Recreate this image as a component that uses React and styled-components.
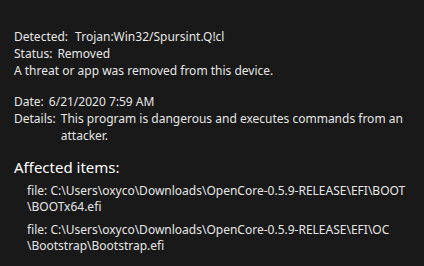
import React from 'react';
import styled, { createGlobalStyle } from 'styled-components';

const GlobalStyle = createGlobalStyle`
    html, body {
        margin: 0;
        padding: 0;
        background: #191919;
    }
    body {
        font-family: "Noto Sans", "Open Sans", sans-serif;
    }
`;

const Page = styled.div`
    width: 424px;
    height: 266px;
    box-sizing: border-box;
    padding: 28px 14px 0 14px;
    background: #191919;
    color: #e6e6e6;
    font-size: 12px;
    line-height: 17px;
    overflow: hidden;
`;

const Section = styled.div`
    margin-bottom: ${(p) => p.gap || 0}px;
`;

const Row = styled.div`
    display: flex;
    gap: ${(p) => p.gap || 5}px;
    white-space: nowrap;
`;

const Label = styled.span`
    flex: none;
`;

const Value = styled.div`
    display: flex;
    flex-direction: column;
`;

const Heading = styled.div`
    font-size: 15px;
    line-height: 20px;
    color: #ffffff;
    margin-bottom: 6px;
`;

const Item = styled.div`
    padding-left: 13px;
    margin-bottom: 7px;
    white-space: nowrap;
    line-height: 16px;
`;

const items = [
    ['file: C:\\Users\\oxyco\\Downloads\\OpenCore-0.5.9-RELEASE\\EFI\\BOOT', '\\BOOTx64.efi'],
    ['file: C:\\Users\\oxyco\\Downloads\\OpenCore-0.5.9-RELEASE\\EFI\\OC', '\\Bootstrap\\Bootstrap.efi'],
];

const App = () => {
    return (
        <Page>
            <GlobalStyle />
            <Section gap={14}>
                <Row gap={7}>
                    <Label>Detected:</Label>
                    <Value>Trojan:Win32/Spursint.Q!cl</Value>
                </Row>
                <Row>
                    <Label>Status:</Label>
                    <Value>Removed</Value>
                </Row>
                <div>A threat or app was removed from this device.</div>
            </Section>
            <Section gap={13}>
                <Row>
                    <Label>Date:</Label>
                    <Value>6/21/2020 7:59 AM</Value>
                </Row>
                <Row>
                    <Label>Details:</Label>
                    <Value>
                        <span>This program is dangerous and executes commands from an</span>
                        <span>attacker.</span>
                    </Value>
                </Row>
            </Section>
            <Heading>Affected items:</Heading>
            {items.map((lines) => (
                <Item key={lines.join('')}>
                    {lines.map((line) => (
                        <div key={line}>{line}</div>
                    ))}
                </Item>
            ))}
        </Page>
    );
};

export default App;
